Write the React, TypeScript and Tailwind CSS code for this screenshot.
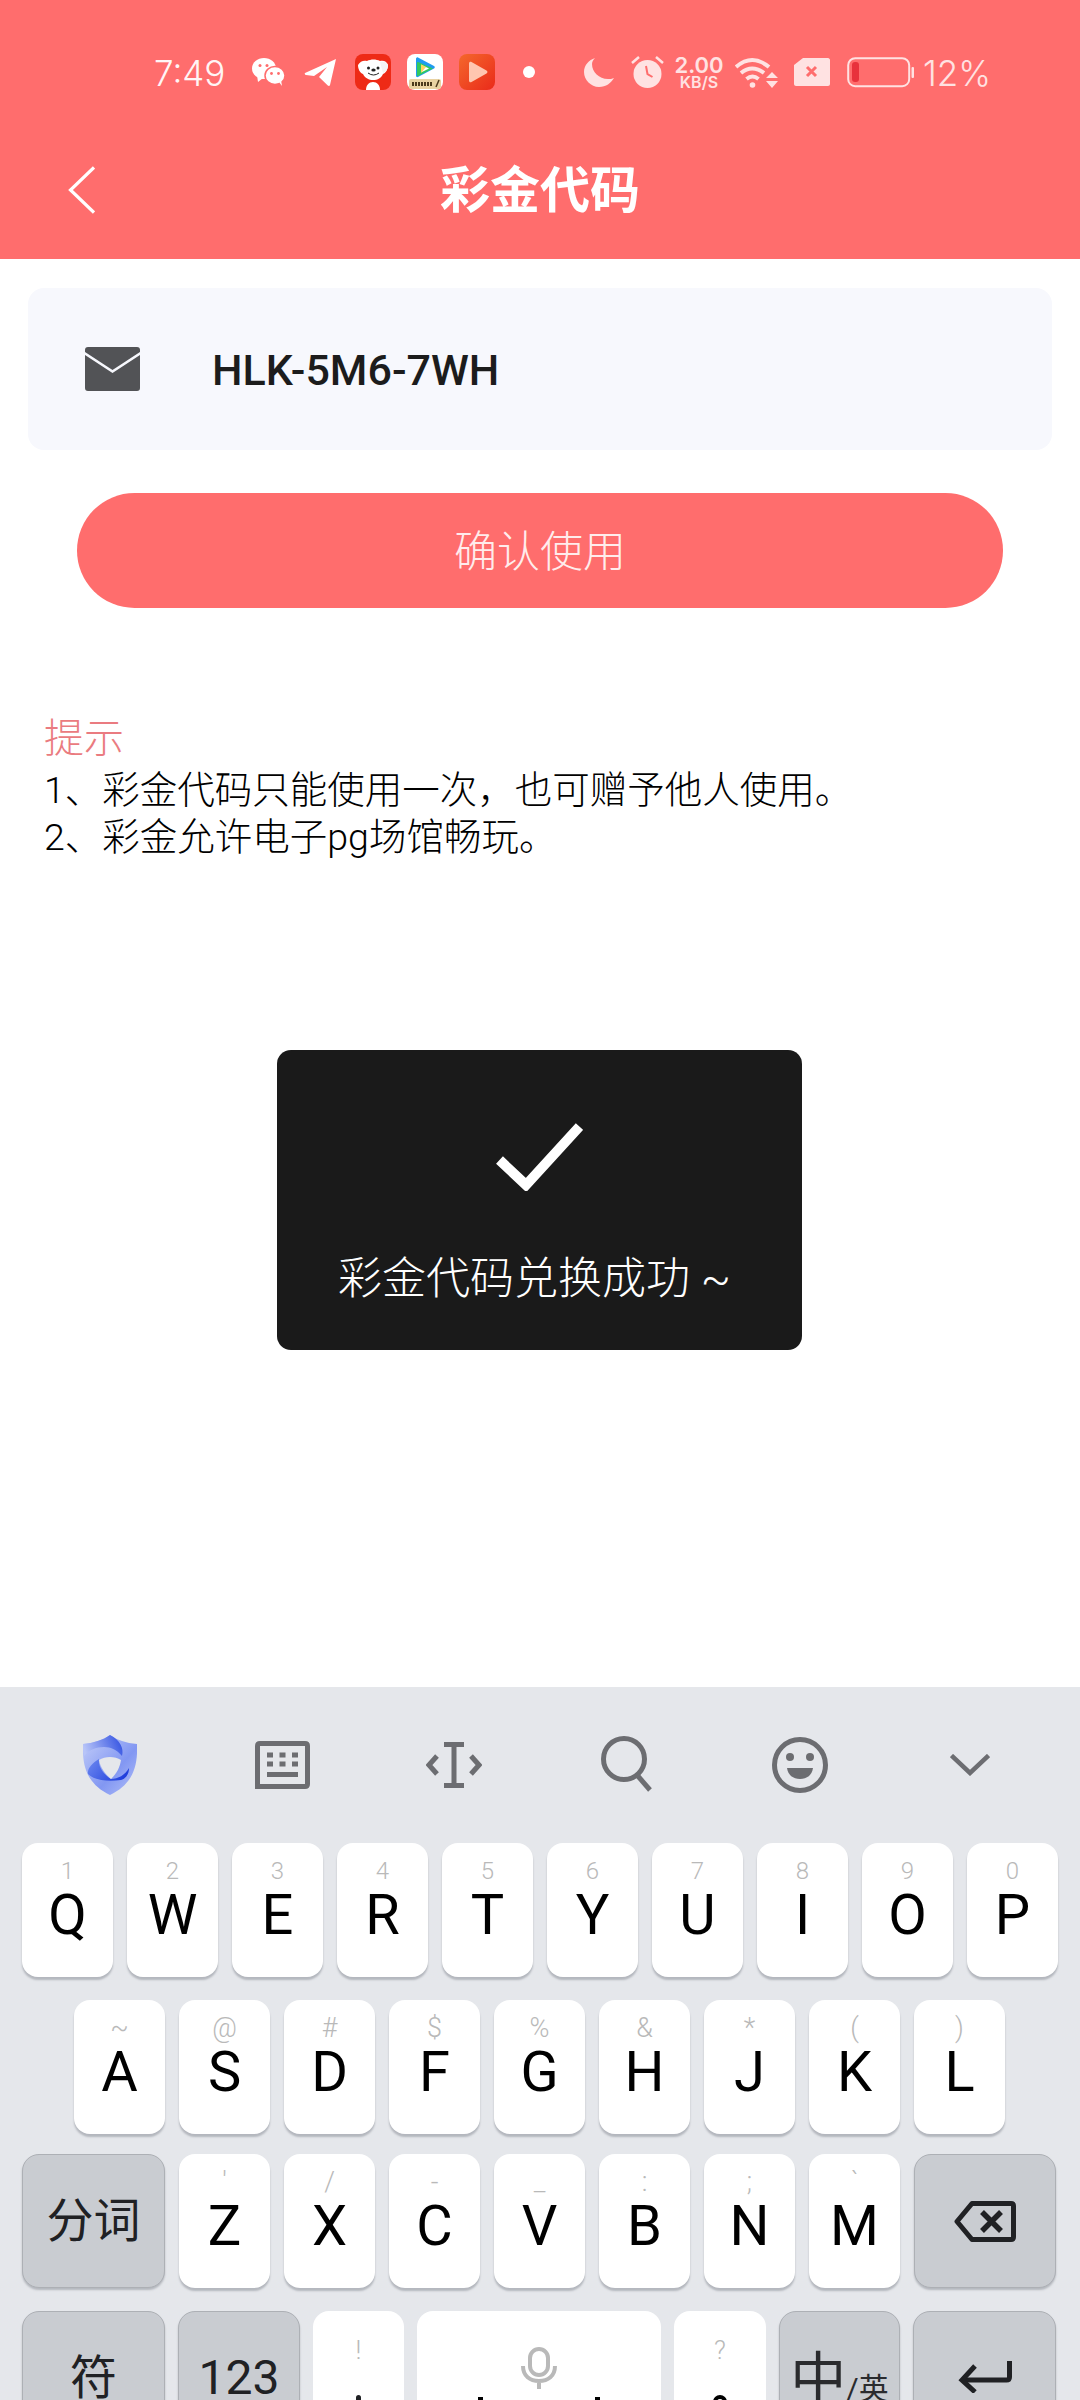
import React from "react";

const row1 = [["1","Q"],["2","W"],["3","E"],["4","R"],["5","T"],["6","Y"],["7","U"],["8","I"],["9","O"],["0","P"]];
const row2 = [["~","A"],["@","S"],["#","D"],["$","F"],["%","G"],["&","H"],["*","J"],["(","K"],[")","L"]];
const row3 = [["'","Z"],["/","X"],["-","C"],["_","V"],[":","B"],[";","N"],["`","M"]];

function LetterKey({ hint, letter, big }: { hint: string; letter: string; big?: boolean }) {
  return (
    <div className="flex h-[134px] w-[91px] flex-col items-center rounded-[16px] bg-white pt-4 shadow-[0_3px_2px_rgba(90,95,105,0.35)]">
      <div className={big ? "h-6 text-[27px] leading-6 font-light text-[#b9b9b9]" : "h-6 text-[24px] leading-6 font-light text-[#b9b9b9]"}>{hint}</div>
      <div className="mt-1 text-[56px] leading-[56px] text-black">{letter}</div>
    </div>
  );
}

function GrayKey({ width, children }: { width: string; children: React.ReactNode }) {
  return (
    <div className={`flex h-[134px] ${width} items-center justify-center rounded-[17px] border border-[#adb0b5] bg-[#c9ccd1] text-[#202124] shadow-[0_2px_2px_rgba(90,95,105,0.35)]`}>
      {children}
    </div>
  );
}

function Wechat() {
  return (
    <svg viewBox="0 0 33 28" className="h-[28px] w-[33px]" fill="#fff">
      <ellipse cx="12" cy="10.5" rx="12" ry="10.5" />
      <path d="M5 17l1 7 5-4z" />
      <ellipse cx="23" cy="17.5" rx="10" ry="9" stroke="#ff6d6d" strokeWidth="1.5" />
      <path d="M27 24l3 4-1-6z" />
      <circle cx="19.5" cy="15.5" r="1.4" fill="#ff6d6d" />
      <circle cx="26.5" cy="15.5" r="1.4" fill="#ff6d6d" />
      <circle cx="8" cy="7.5" r="1.5" fill="#ff6d6d" />
      <circle cx="15" cy="7.5" r="1.5" fill="#ff6d6d" />
    </svg>
  );
}

function StatusIcons() {
  return (
    <>
      <svg viewBox="0 0 33 29" className="ml-[19px] h-[29px] w-[33px]" fill="#fff">
        <path d="M1 15L32 1 26 27c-.3 1.2-1.4 1.4-2.2.6L15 19l8-10-13 9-8-1c-1.2-.3-1.6-1.4-1-2z" />
      </svg>
      {/* JD dog */}
      <svg viewBox="0 0 36 36" className="ml-[18px] h-[36px] w-[36px]">
        <rect width="36" height="36" rx="8" fill="#ee2a16" />
        <path d="M3 11c2-4 6-5 9-4 4-2 9-2 13 0 3-1 7 0 8 4 0 4-2 8-5 9-2 4-5 6-10 6-4 0-8-2-10-6-3-1-5-5-5-9z" fill="#fff" />
        <path d="M11 36c0-5 3-8 7-8s7 3 7 8z" fill="#fff" />
        <path d="M25 8c3-1 7 0 8 3 0 4-2 7-5 8z" fill="#f5f5f5" />
        <circle cx="13.5" cy="14" r="1.5" fill="#222" />
        <circle cx="23" cy="14" r="1.5" fill="#222" />
        <ellipse cx="18.5" cy="16" rx="2.2" ry="1.5" fill="#222" />
        <path d="M13 19q5.5 4 11 0" stroke="#222" strokeWidth="1" fill="none" />
      </svg>
      {/* Tencent video */}
      <svg viewBox="0 0 36 36" className="ml-[16px] h-[36px] w-[36px]">
        <rect width="36" height="36" rx="8" fill="#fff" />
        <path d="M9 5c0-1 1-2 2-1.500L27 12c1 .6 1 2 0 2.500L11 23c-1 .5-2-.2-2-1.300z" fill="#1f9bf0" />
        <path d="M11 8l15 6.500L11 22c-1 .3-1-.5-1-1V9c0-1 .4-1.200 1-1z" fill="#34c95c" />
        <path d="M14 10.500l8 4-8 4z" fill="#fff" />
        <path d="M14 10.500l5 2.500-5 6z" fill="#ffc21a" opacity=".7" />
        <rect x="2" y="25" width="32" height="10" rx="2" fill="#e9d2a2" />
        <path d="M5 28h2v4H5zm3 0h2v4H8zm3 0h2v4h-2zm3 0h2v4h-2zm3 0h2v4h-2zm3 0h2v4h-2zm3 0h2v4h-2z" fill="#4c3a1c" />
        <path d="M29 33l3-7" stroke="#4c3a1c" strokeWidth="1.500" />
      </svg>
      {/* Orange player */}
      <svg viewBox="0 0 36 36" className="ml-[16px] h-[36px] w-[36px]">
        <defs>
          <linearGradient id="og" x1="0" y1="0" x2="1" y2="1">
            <stop offset="0" stopColor="#f4682c" />
            <stop offset="1" stopColor="#ea2a1a" />
          </linearGradient>
        </defs>
        <rect width="36" height="36" rx="8" fill="url(#og)" />
        <path d="M10 9.500c0-1.500 1.300-2.200 2.500-1.500l15 8.500c1.300.7 1.300 2.300 0 3l-15 8.500c-1.200.7-2.500 0-2.500-1.500z" fill="#ffc6b0" />
      </svg>
      <div className="ml-[28px] h-[12px] w-[12px] rounded-full bg-white" />
      {/* Moon */}
      <svg viewBox="0 0 30 30" className="ml-[49px] h-[30px] w-[30px]" fill="#ffe2e2">
        <path d="M11 1C5 3 0 8 0 15c0 8 7 15 15 15 7 0 12-4 15-9-2 1-4 1-6 1-9 0-16-7-16-15 0-2 1-4 3-6z" />
      </svg>
      {/* Alarm */}
      <svg viewBox="0 0 33 32" className="ml-[17px] h-[32px] w-[33px]">
        <circle cx="16.500" cy="18" r="14" fill="#ffe2e2" />
        <path d="M1 7l7-6M32 7l-7-6" stroke="#ffe2e2" strokeWidth="2.500" />
        <path d="M15 10l1.500 8 5 3" stroke="#ff6d6d" strokeWidth="2" fill="none" />
      </svg>
      {/* Speed */}
      <div className="ml-[8px] flex w-[54px] flex-col items-center font-semibold text-[#ffe2e2] [font-family:Inter,sans-serif]">
        <div className="h-[20px] text-[22px] leading-[20px]">2.00</div>
        <div className="mt-[1px] h-[13px] text-[16px] leading-[13px]">KB/S</div>
      </div>
      {/* Wifi */}
      <svg viewBox="0 0 44 31" className="ml-[9px] h-[31px] w-[44px]" fill="none" stroke="#ffe2e2" strokeWidth="4">
        <path d="M1 10q16-14 33 0" />
        <path d="M6 16q11-9 23 0" />
        <path d="M11.500 22q6-5 12 0" />
        <circle cx="17.500" cy="28" r="2.800" fill="#ffe2e2" stroke="none" />
        <path d="M31 21h12l-6-6zM31 24h12l-6 7z" fill="#ffe2e2" stroke="none" />
      </svg>
      {/* SIM */}
      <svg viewBox="0 0 36 28" className="ml-[15px] h-[28px] w-[36px]">
        <path d="M9 0h25c1 0 2 1 2 2v24c0 1-1 2-2 2H2c-1 0-2-1-2-2V7z" fill="#ffe2e2" />
        <path d="M13 9l9 9M22 9l-9 9" stroke="#ff6d6d" strokeWidth="3" />
      </svg>
      {/* Battery */}
      <svg viewBox="0 0 67 31" className="ml-[17px] h-[31px] w-[67px]">
        <rect x="1.200" y="1.200" width="61" height="28" rx="7" fill="none" stroke="#ffe2e2" strokeWidth="2" />
        <rect x="5" y="5" width="7" height="20" rx="3" fill="#e8323c" />
        <rect x="64.500" y="10" width="2.500" height="11" rx="1" fill="#ffe2e2" />
      </svg>
      <div className="ml-[9px] mt-[2px] text-[35px] leading-[35px] font-light text-[#ffe2e2] [font-family:Inter,sans-serif]">12%</div>
    </>
  );
}

function Shield() {
  return (
    <svg viewBox="0 0 54 60" className="h-[60px] w-[54px]">
      <defs>
        <linearGradient id="s1" x1="0" y1="0" x2="1" y2="1">
          <stop offset="0" stopColor="#c6d0f9" />
          <stop offset="0.600" stopColor="#8297f2" />
          <stop offset="1" stopColor="#b3c0f8" />
        </linearGradient>
        <linearGradient id="s2" x1="0" y1="0.500" x2="1" y2="0.300">
          <stop offset="0" stopColor="#b7c4f8" />
          <stop offset="1" stopColor="#3453e2" />
        </linearGradient>
        <linearGradient id="s3" x1="0" y1="0.300" x2="1" y2="0.700">
          <stop offset="0" stopColor="#6682ee" />
          <stop offset="1" stopColor="#1c3bdb" />
        </linearGradient>
      </defs>
      <path d="M27 0c7 5 16 8 27 9 1 22-4 40-27 51C4 49-1 31 0 9 11 8 20 5 27 0z" fill="url(#s1)" />
      <path d="M27 0C20 5 10 8 0 9c0 4 0 8 1 12 5-6 12-9 20-9 7 0 13 3 18 9 2-8-2-16-12-21z" fill="url(#s2)" />
      <path d="M16 24C9 28 4 34 5 39c5 5 15 8 33 6 4-1 8-5 8-12-4 7-11 11-18 11-7-4-13-12-12-20z" fill="url(#s3)" />
      <path d="M27 22c4 0 8 1 11 3-1 7-4 13-10 19-6-5-11-12-12-19 3-2 7-3 11-3z" fill="#e5e7eb" />
    </svg>
  );
}

export default function App() {
  return (
    <div className="flex h-[2400px] w-[1080px] flex-col overflow-hidden bg-white [font-family:Roboto,'Noto_Sans_CJK_SC',sans-serif]">
      <header className="bg-[#ff6d6d] pb-[23px]">
        <div className="flex h-[144px] items-center pl-[154px]">
          <div className="mt-[2px] w-[72px] text-[35px] leading-[35px] font-light whitespace-nowrap text-[#fff5f5] [font-family:Inter,sans-serif]">7:49</div>
          <div className="ml-[26px]"><Wechat /></div>
          <StatusIcons />
        </div>
        <div className="grid h-[92px] grid-cols-[1fr_auto_1fr] items-center">
          <svg viewBox="0 0 27 48" className="ml-[68px] h-[48px] w-[27px]" fill="none" stroke="#fff" strokeWidth="3.200">
            <path d="M26 1.500L2.500 24 26 46.500" />
          </svg>
          <h1 className="mt-[2px] text-[50px] leading-[60px] font-bold text-white">彩金代码</h1>
          <div />
        </div>
      </header>

      <main className="relative flex-1 px-[28px] pt-[29px]">
        <div className="flex h-[162px] w-[1024px] items-center rounded-[16px] bg-[#f7f8fd] pl-[57px]">
          <svg viewBox="0 0 55 44" className="h-[44px] w-[55px]">
            <path d="M3 0h49c2 0 3 1 3 3v2L27.500 23 0 5V3c0-2 1-3 3-3z" fill="#525356" />
            <path d="M0 8l27.500 18L55 8v33c0 2-1 3-3 3H3c-2 0-3-1-3-3z" fill="#525356" />
          </svg>
          <div className="ml-[72px] mt-[2px] text-[43px] leading-[48px] font-medium text-[#1c1c1c]">HLK-5M6-7WH</div>
        </div>

        <button className="mx-[49px] mt-[43px] flex h-[115px] w-[926px] items-center justify-center rounded-full bg-[#ff6d6d] pt-[4px] text-[43px] font-light text-[#ffecec]">
          确认使用
        </button>

        <div className="mt-[107px] px-[16px] text-[37.500px] leading-[47px] font-light text-black">
          <div className="mb-[5px] text-[40px] text-[#ea7b80]">提示</div>
          <div>1、彩金代码只能使用一次，也可赠予他人使用。</div>
          <div>2、彩金允许电子pg场馆畅玩。</div>
        </div>

        <div className="absolute top-[791px] left-[277px] flex h-[300px] w-[525px] flex-col items-center rounded-[14px] bg-[#1a1a1a] pt-[73px]">
          <svg viewBox="0 0 87 68" className="h-[68px] w-[87px]" fill="none" stroke="#fff" strokeWidth="10">
            <path d="M3.500 37L30 62 83.500 3.500" />
          </svg>
          <div className="mt-[64px] pr-[10px] text-[44px] leading-[48px] font-light whitespace-nowrap text-white">彩金代码兑换成功 ~</div>
        </div>
      </main>

      <section className="h-[713px] bg-[#e5e7eb]">
        <div className="grid h-[156px] grid-cols-[repeat(6,172px)] items-center justify-items-center pl-[24px]">
          <Shield />
          <svg viewBox="0 0 55 48" className="h-[48px] w-[55px]" fill="none" stroke="#6c6d71" strokeWidth="5">
            <path d="M2.500 45.500V5c0-1.500 1-2.500 2.500-2.500h45c1.500 0 2.500 1 2.500 2.500v38c0 1.500-1 2.500-2.500 2.500z" />
            <path d="M12 14h6M24.500 14h6M37 14h6M12 23h6M24.500 23h6M37 23h6M12 33.500h31" />
          </svg>
          <svg viewBox="0 0 56 46" className="h-[46px] w-[56px]" fill="none" stroke="#6c6d71" strokeWidth="5">
            <path d="M18 2.500h20M18 43.500h20M28 2.500v41" />
            <path d="M11 14l-8 9 8 9M45 14l8 9-8 9" />
          </svg>
          <svg viewBox="0 0 52 56" className="h-[56px] w-[52px] -translate-y-[1px] translate-x-[1px]" fill="none" stroke="#6c6d71" strokeWidth="5">
            <circle cx="23" cy="23" r="20.500" />
            <path d="M36 39l13 15" />
          </svg>
          <svg viewBox="0 0 56 56" className="h-[56px] w-[56px] translate-x-[2px]">
            <circle cx="28" cy="28" r="25.500" fill="none" stroke="#6c6d71" strokeWidth="5" />
            <circle cx="18" cy="20" r="4" fill="#6c6d71" />
            <circle cx="38" cy="20" r="4" fill="#6c6d71" />
            <path d="M15 31h26c-1 7-6 11-13 11s-12-4-13-11z" fill="#6c6d71" />
          </svg>
          <svg viewBox="0 0 40 22" className="h-[22px] w-[40px]" fill="none" stroke="#6c6d71" strokeWidth="4.500">
            <path d="M1.500 1.500L20 19 38.500 1.500" />
          </svg>
        </div>

        <div className="flex flex-col">
          <div className="flex gap-[14px] pl-[22px]">
            {row1.map(([h, l]) => <LetterKey key={l} hint={h} letter={l} />)}
          </div>
          <div className="mt-[23px] flex gap-[14px] pl-[74px]">
            {row2.map(([h, l]) => <LetterKey key={l} hint={h} letter={l} big />)}
          </div>
          <div className="mt-[20px] flex gap-[14px] pl-[22px]">
            <GrayKey width="w-[143px]"><span className="text-[47px]">分词</span></GrayKey>
            {row3.map(([h, l]) => <LetterKey key={l} hint={h} letter={l} big />)}
            <GrayKey width="w-[142px]">
              <svg viewBox="0 0 62 41" className="h-[41px] w-[62px]" fill="none" stroke="#202124" strokeWidth="5">
                <path d="M18 2.500h39c1.500 0 2.500 1 2.500 2.500v31c0 1.500-1 2.500-2.500 2.500H18L3 20.500z" strokeLinejoin="round" />
                <path d="M28 11l19 19M47 11L28 30" strokeWidth="5.500" />
              </svg>
            </GrayKey>
          </div>
          <div className="mt-[23px] flex gap-[13px] pl-[22px]">
            <GrayKey width="w-[143px]"><span className="text-[47px]">符</span></GrayKey>
            <GrayKey width="w-[122px]"><span className="text-[48px]">123</span></GrayKey>
            <div className="flex h-[134px] w-[91px] flex-col items-center rounded-[16px] bg-white pt-[27px]">
              <div className="h-6 text-[26px] leading-6 font-light text-[#b9b9b9]">!</div>
              <div className="mt-[33px] h-[6px] w-[5px] rounded-t-full bg-[#202124]" />
            </div>
            <div className="flex h-[134px] w-[244px] flex-col items-center rounded-[16px] bg-white pt-[36px]">
              <svg viewBox="0 0 36 42" className="h-[42px] w-[36px]" fill="none" stroke="#b9b9b9" strokeWidth="4">
                <rect x="9" y="2" width="18" height="26" rx="9" />
                <path d="M2 19c0 10 7 15 16 15s16-5 16-15M18 34v8" />
              </svg>
              <div className="mt-[8px] h-[12px] w-[122px] border-x-[5px] border-black" />
            </div>
            <div className="flex h-[134px] w-[92px] flex-col items-center rounded-[16px] bg-white pt-[27px]">
              <div className="h-6 text-[26px] leading-6 font-light text-[#b9b9b9]">?</div>
              <div className="mt-[33px] h-[14px] w-[14px] rounded-full border-[4px] border-black" />
            </div>
            <GrayKey width="w-[121px]">
              <span className="mt-[2px] flex items-end">
                <span className="text-[56px] leading-[64px] text-[#2a2b2e]">中</span>
                <span className="text-[30px] leading-[44px] text-[#2a2b2e]">/英</span>
              </span>
            </GrayKey>
            <GrayKey width="w-[143px]">
              <svg viewBox="0 0 54 32" className="mt-[-2px] h-[32px] w-[54px]" fill="none" stroke="#202124" strokeWidth="5">
                <path d="M51.500 0v16c0 2-1 3-3 3H4" />
                <path d="M17 5L4 19l13 12" />
              </svg>
            </GrayKey>
          </div>
        </div>
      </section>
    </div>
  );
}
